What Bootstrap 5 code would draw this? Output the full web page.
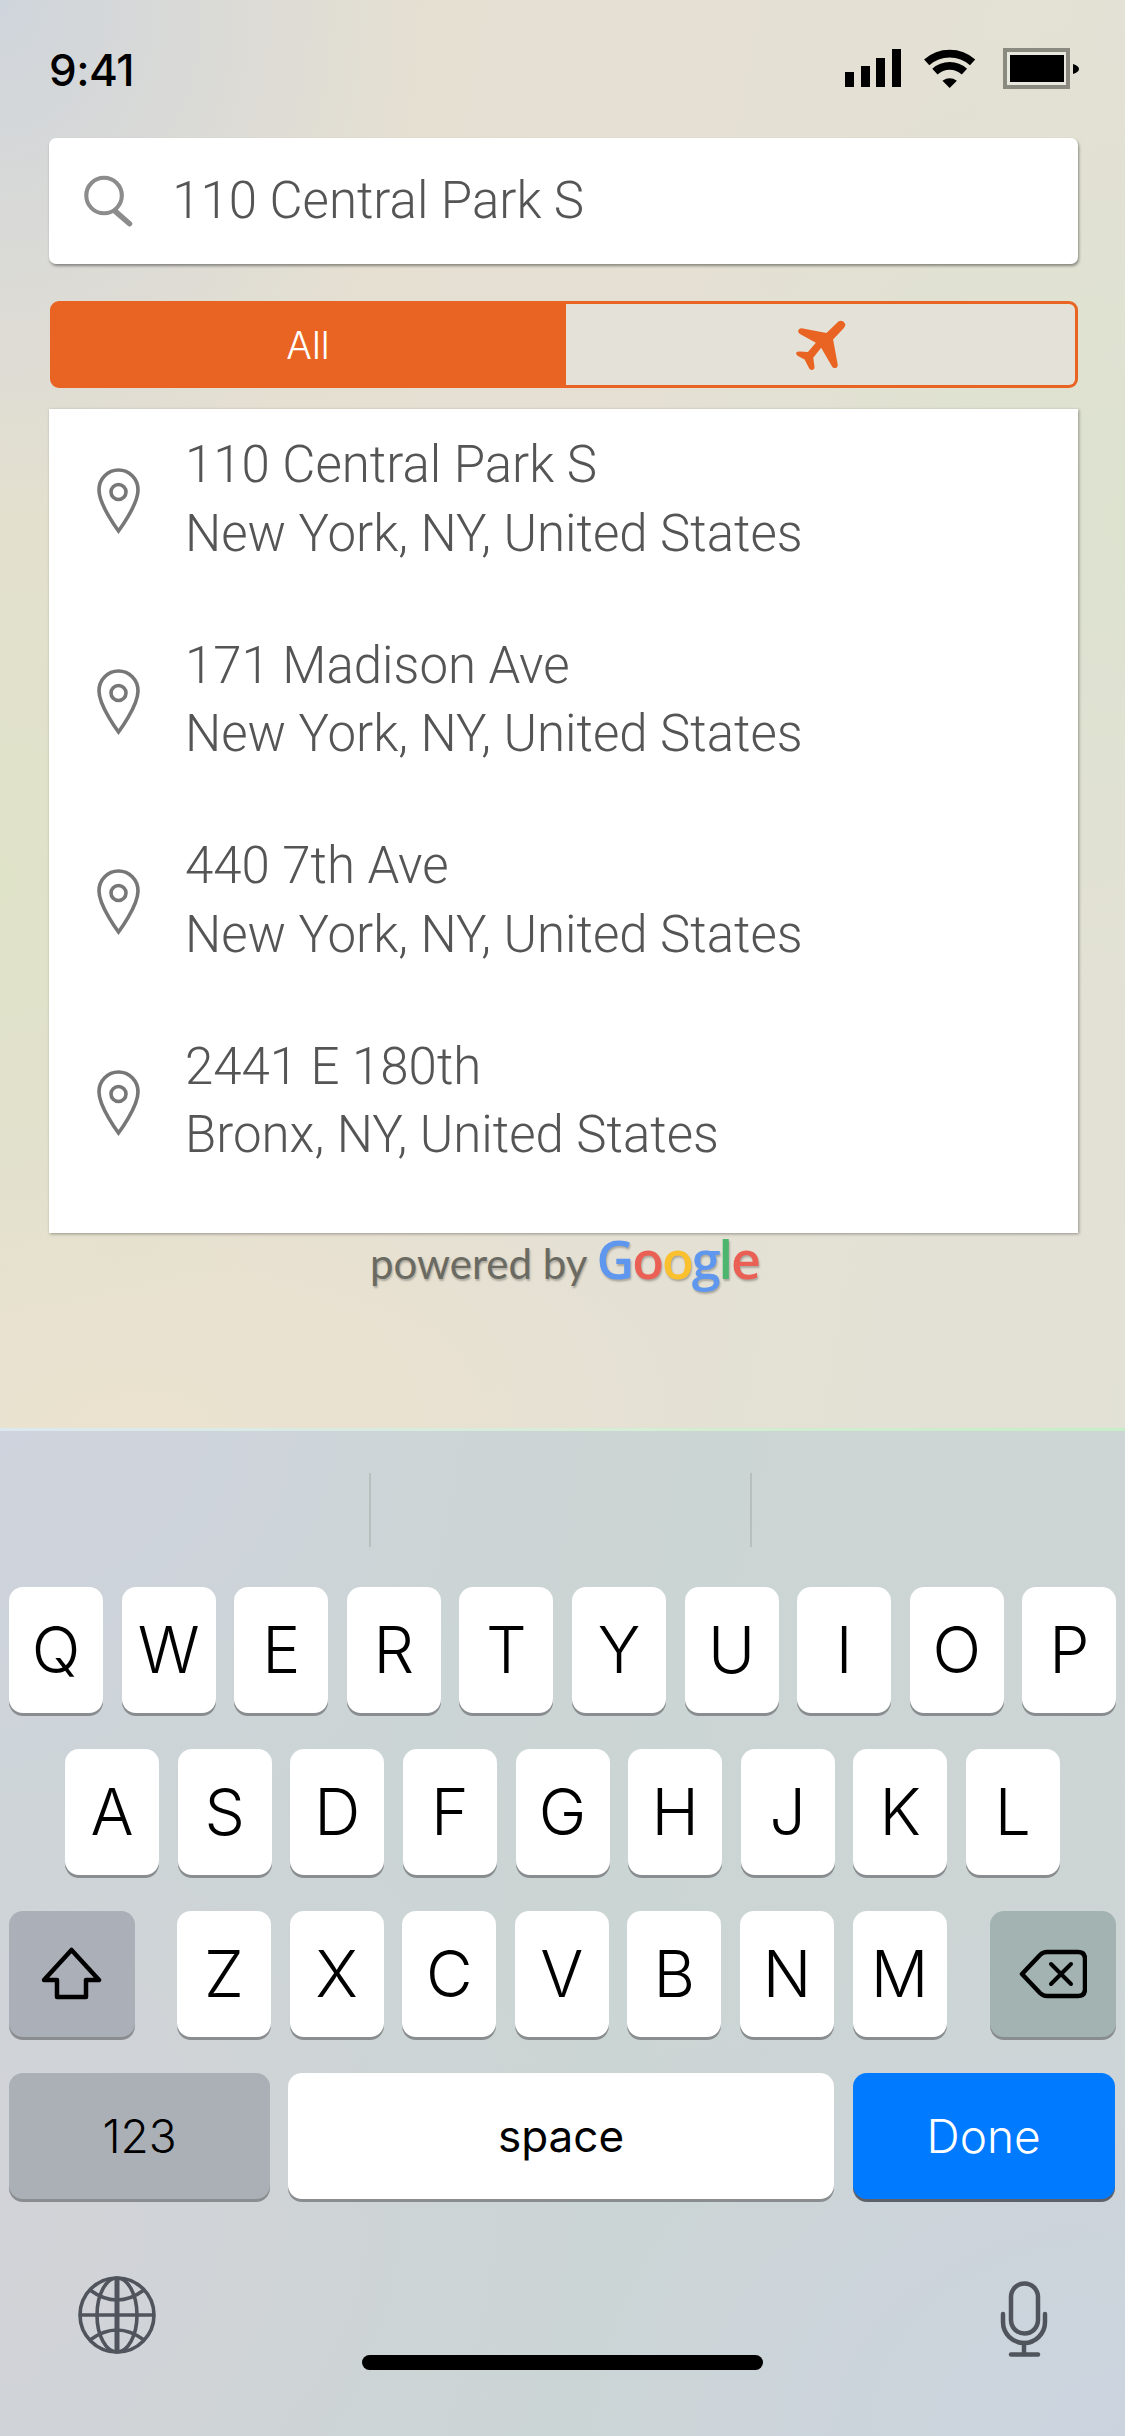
<!DOCTYPE html>
<html lang="en">
<head>
    <meta charset="UTF-8">
    <meta name="viewport" content="width=device-width, initial-scale=1.0">
    <title>Search address</title>
    <link href="https://cdn.jsdelivr.net/npm/bootstrap@5.3.0/dist/css/bootstrap.min.css" rel="stylesheet">
    <style>
        html, body { margin: 0; width: 1125px; height: 2436px; overflow: hidden; }
        .screen { width: 1125px; height: 2436px; font-family: Roboto, "Liberation Sans", sans-serif; }
        /* top part */
        .top-pane {
            height: 1428px; padding: 0 47px 0 49px;
            background:
                radial-gradient(420px 520px at 0 0, #cfd5dc 0%, rgba(207,213,220,0) 100%),
                radial-gradient(500px 500px at 1125px 520px, #dde2cf 0%, rgba(221,226,207,0) 100%),
                radial-gradient(400px 500px at 0 880px, #dfe3c8 0%, rgba(223,227,200,0) 100%),
                radial-gradient(560px 300px at 130px 1428px, #ebe3cf 0%, rgba(235,227,207,0) 100%),
                linear-gradient(100deg, #e5dfd0 0%, #e5e0d3 50%, #e2e1d6 100%);
        }
        .status-row { height: 138px; padding-top: 48px; align-items: flex-start; }
        .clock { font-family: Inter, "Liberation Sans", sans-serif; font-size: 44px; font-weight: 500; line-height: 44px; color: #000; letter-spacing: -.5px; }
        .status-icons { gap: 0; margin-right: -1px; }
        .search-box {
            height: 126px; background: #fff; border-radius: 7px; padding-left: 35px;
            box-shadow: 1px 2px 3px rgba(0,0,0,.4);
        }
        .search-input {
            border: 0; padding: 0; margin-left: 38px; background: transparent; box-shadow: none;
            font-family: Roboto, sans-serif; font-size: 51px; font-weight: 300; color: #555; height: 60px;
        }
        .seg-group { display: flex; height: 87px; margin: 37px 0 0 1px; }
        .seg-all, .seg-air {
            border: 3px solid #e96422; padding: 0; display: flex; align-items: center; justify-content: center;
        }
        .seg-all {
            width: 516px; background: #e96422; color: #fff; border-radius: 9px 0 0 9px;
            font-family: Inter, sans-serif; font-size: 38px; font-weight: 300; line-height: 1;
        }
        .seg-air { flex: 1; background: #e4e1d8; border-left: 0; border-radius: 0 9px 9px 0; }
        .result-list {
            margin-top: 21px; height: 824px; background: #fff; border-radius: 0;
            box-shadow: 1px 1px 3px rgba(0,0,0,.35); padding-top: 22px;
        }
        .result-row {
            height: 204.6px; padding: 0 0 0 48px; border: 0; background: transparent; align-items: flex-start;
            gap: 45px; color: #555; font-size: 51px; font-weight: 300; line-height: 68.5px;
        }
        .result-pin { margin-top: 37px; flex: none; }
        .google-row {
            margin-top: 4px; height: 52px; justify-content: center; align-items: center; gap: 9px;
            font-family: Lato, sans-serif; font-size: 42px; line-height: 52px; color: #6a6a62;
            text-shadow: 1px 2px 2px rgba(0,0,0,.25); padding-left: 2px;
        }
        .google-word { font-family: "Open Sans", sans-serif; font-size: 52px; font-weight: 600; letter-spacing: -2px; line-height: 52px; margin-top: -8px; }
        .g-blue { color: #5f96ee; } .g-red { color: #ea6055; } .g-yel { color: #fbc02d; } .g-grn { color: #4cb56e; }
        /* keyboard */
        .kb-pane {
            height: 1008px; position: relative;
            background:
                radial-gradient(700px 520px at 1125px 1008px, #cbd3df 0%, rgba(203,211,223,0) 100%),
                radial-gradient(600px 500px at 0 800px, #d2d3d8 0%, rgba(210,211,216,0) 100%),
                radial-gradient(520px 420px at 0 0, #cfd3dd 0%, rgba(207,211,221,0) 100%),
                linear-gradient(100deg, #cdd4d8 0%, #cbd5d3 55%, #ced6d5 100%);
        }
        .kb-line { height: 3px; background: linear-gradient(90deg, #dbe8ef 0%, #d8ecd8 50%, #c6eec6 100%); }
        .suggest-bar { display: grid; grid-template-columns: 369px 381px 1fr; height: 156px; padding-top: 42px; }
        .suggest-cell + .suggest-cell { border-left: 0; }
        .suggest-sep { display: block; width: 2px; height: 74px; margin-left: 369px; background: #b7bfbf; }
        .kb-row { gap: 18.6px; margin-bottom: 36px; padding: 0 9px; }
        .kb-row-mid { justify-content: center; }
        .kb-key {
            width: 94px; height: 126px; flex: none; padding: 0; border: 0; border-radius: 14px; background: #fff; color: #000;
            box-shadow: 0 3px 0 #898d8f; font-family: Inter, "Liberation Sans", sans-serif; font-size: 64px; font-weight: 300; line-height: 1;
            display: flex; align-items: center; justify-content: center;
        }
        .kb-shift { width: 126px; margin-right: 23.4px; background: #abafb7; }
        .kb-del { width: 126px; margin-left: 24.4px; background: #a3b3b2; }
        .kb-num { width: 261px; background: #abb0b7; font-size: 46px; }
        .kb-space { width: 546px; font-size: 44px; font-weight: 400; margin-left: -.6px; }
        .kb-done { width: 262px; background: #007aff; color: #fff; box-shadow: 0 3px 0 #5c616a; font-size: 46px; margin-left: 0; }
        .kb-bottom { padding: 41px 77px 0 78px; height: 120px; align-items: flex-start; justify-content: space-between; }
        .home-bar { width: 401px; height: 15px; border-radius: 8px; background: #000; margin: 0 auto; }
    </style>
</head>
<body>
<div class="screen d-flex flex-column">
    <div class="top-pane">
        <div class="status-row d-flex justify-content-between">
            <span class="clock">9:41</span>
            <div class="status-icons d-flex align-items-start">
                <svg width="58" height="40" viewBox="0 0 58 40"><path d="M0 24h9v15H0zM16 18h9v21h-9zM31 10h9v29h-9zM47 1h9v38h-9z" fill="#000"/></svg>
                <svg width="56" height="40" viewBox="300 50 170 122" style="margin-left:18px"><g fill="none" stroke="#000" stroke-width="24"><path d="M317 94A105 105 0 0 1 457 94"/><path d="M342 122A67 67 0 0 1 432 122"/></g><path d="M387 172L365 150Q387 135 409 150Z" fill="#000"/></svg>
                <svg width="76" height="41" viewBox="0 0 76 41" style="margin-left:26px"><rect x="2" y="2" width="63" height="37" fill="#e9e8de" stroke="#8a8a80" stroke-width="4"/><rect x="7" y="7" width="54" height="27" fill="#000"/><path d="M70 16q6 2 6 5t-6 5z" fill="#000"/></svg>
            </div>
        </div>

        <div class="search-box d-flex align-items-center">
            <svg width="55" height="56" viewBox="0 0 55 56"><circle cx="22" cy="22" r="19.5" fill="none" stroke="#8c8c8c" stroke-width="4.5"/><path d="M35 40l15 13" fill="none" stroke="#8c8c8c" stroke-width="6" stroke-linecap="round"/></svg>
            <input class="form-control search-input" type="text" value="110 Central Park S">
        </div>

        <div class="seg-group btn-group" role="group">
            <button type="button" class="seg-all">All</button>
            <button type="button" class="seg-air">
                <svg width="53" height="52" viewBox="170 88 160 157"><path fill="#e96422" d="M305 95Q318 90 325 103Q326 110 320 116L288 150L302 225Q303 236 292 236Q286 236 284 230L252 175L228 205L232 232Q232 242 222 242Q216 240 214 234L202 210L182 200Q174 195 178 188Q182 185 188 186L212 188L236 160L188 133Q178 125 186 118Q190 115 197 117L268 130Z"/></svg>
            </button>
        </div>

        <div class="result-list list-group">
            <div class="result-row list-group-item d-flex">
                <svg class="result-pin" width="43" height="67" viewBox="0 0 43 67"><path d="M21.5 63C21.5 63 2 37 2 22A19.5 20 0 0 1 41 22C41 37 21.5 63 21.5 63Z" fill="none" stroke="#777" stroke-width="3.6"/><circle cx="21.5" cy="24" r="7.5" fill="none" stroke="#777" stroke-width="3.6"/></svg>
                <div>110 Central Park S<br>New York, NY, United States</div>
            </div>
            <div class="result-row list-group-item d-flex">
                <svg class="result-pin" width="43" height="67" viewBox="0 0 43 67"><path d="M21.5 63C21.5 63 2 37 2 22A19.5 20 0 0 1 41 22C41 37 21.5 63 21.5 63Z" fill="none" stroke="#777" stroke-width="3.6"/><circle cx="21.5" cy="24" r="7.5" fill="none" stroke="#777" stroke-width="3.6"/></svg>
                <div>171 Madison Ave<br>New York, NY, United States</div>
            </div>
            <div class="result-row list-group-item d-flex">
                <svg class="result-pin" width="43" height="67" viewBox="0 0 43 67"><path d="M21.5 63C21.5 63 2 37 2 22A19.5 20 0 0 1 41 22C41 37 21.5 63 21.5 63Z" fill="none" stroke="#777" stroke-width="3.6"/><circle cx="21.5" cy="24" r="7.5" fill="none" stroke="#777" stroke-width="3.6"/></svg>
                <div>440 7th Ave<br>New York, NY, United States</div>
            </div>
            <div class="result-row list-group-item d-flex">
                <svg class="result-pin" width="43" height="67" viewBox="0 0 43 67"><path d="M21.5 63C21.5 63 2 37 2 22A19.5 20 0 0 1 41 22C41 37 21.5 63 21.5 63Z" fill="none" stroke="#777" stroke-width="3.6"/><circle cx="21.5" cy="24" r="7.5" fill="none" stroke="#777" stroke-width="3.6"/></svg>
                <div>2441 E 180th<br>Bronx, NY, United States</div>
            </div>
        </div>

        <div class="google-row d-flex">
            <span>powered by</span>
            <span class="google-word"><span class="g-blue">G</span><span class="g-red">o</span><span class="g-yel">o</span><span class="g-blue">g</span><span class="g-grn">l</span><span class="g-red">e</span></span>
        </div>
    </div>

    <div class="kb-pane">
        <div class="kb-line"></div>
        <div class="suggest-bar">
            <div class="suggest-cell"></div>
            <div class="suggest-cell"><span class="suggest-sep" style="margin-left:0"></span></div>
            <div class="suggest-cell"><span class="suggest-sep" style="margin-left:0"></span></div>
        </div>
        <div class="kb-row d-flex">
            <button class="kb-key">Q</button><button class="kb-key">W</button><button class="kb-key">E</button><button class="kb-key">R</button><button class="kb-key">T</button><button class="kb-key">Y</button><button class="kb-key">U</button><button class="kb-key">I</button><button class="kb-key">O</button><button class="kb-key">P</button>
        </div>
        <div class="kb-row kb-row-mid d-flex">
            <button class="kb-key">A</button><button class="kb-key">S</button><button class="kb-key">D</button><button class="kb-key">F</button><button class="kb-key">G</button><button class="kb-key">H</button><button class="kb-key">J</button><button class="kb-key">K</button><button class="kb-key">L</button>
        </div>
        <div class="kb-row d-flex">
            <button class="kb-key kb-shift" aria-label="shift">
                <svg width="62" height="54" viewBox="0 0 62 54"><path d="M30.5 3L58 33H45V50H16V33H3Z" fill="none" stroke="#000" stroke-width="4.5" stroke-linejoin="round"/></svg>
            </button>
            <button class="kb-key">Z</button><button class="kb-key">X</button><button class="kb-key">C</button><button class="kb-key">V</button><button class="kb-key">B</button><button class="kb-key">N</button><button class="kb-key">M</button>
            <button class="kb-key kb-del" aria-label="delete">
                <svg width="68" height="50" viewBox="0 0 68 50"><path d="M3 25L21 6Q24 3 28 3H59Q66 3 66 10V40Q66 47 59 47H28Q24 47 21 44Z" fill="none" stroke="#000" stroke-width="4.5" stroke-linejoin="round"/><path d="M32 15L52 35M52 15L32 35" stroke="#000" stroke-width="4" stroke-linecap="round"/></svg>
            </button>
        </div>
        <div class="kb-row d-flex">
            <button class="kb-key kb-num">123</button>
            <button class="kb-key kb-space">space</button>
            <button class="kb-key kb-done">Done</button>
        </div>
        <div class="kb-bottom d-flex">
            <svg width="78" height="78" viewBox="0 0 78 78"><g fill="none" stroke="#50545c" stroke-width="3.6"><circle cx="39" cy="39" r="37"/><ellipse cx="39" cy="39" rx="20" ry="37"/><path d="M39 2V76" stroke-width="5"/><path d="M2 39H76"/><path d="M12 14Q39 34 66 14"/><path d="M12 64Q39 44 66 64"/></g></svg>
            <svg width="48" height="76" viewBox="0 0 48 76" style="margin-top:5px"><g fill="none" stroke="#50545c" stroke-width="4.5" stroke-linecap="round"><rect x="11" y="2.5" width="27" height="50" rx="13.5"/><path d="M3 33V41A21 21 0 0 0 45 41V33"/><path d="M24 62V73"/><path d="M11 73.5H38"/></g></svg>
        </div>
        <div class="home-bar"></div>
    </div>
</div>
<script src="https://cdn.jsdelivr.net/npm/bootstrap@5.3.0/dist/js/bootstrap.bundle.min.js"></script>
</body>
</html>
